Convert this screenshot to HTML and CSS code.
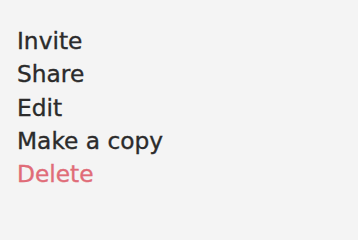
FILE: index.html
```html
<!DOCTYPE html>
<html>
<head>
<meta charset="utf-8">
<link rel="stylesheet" href="styles.css">
</head>
<body>
<ul class="menu">
  <li class="menu-item">Invite</li>
  <li class="menu-item">Share</li>
  <li class="menu-item">Edit</li>
  <li class="menu-item">Make a copy</li>
  <li class="menu-item menu-item--danger">Delete</li>
</ul>
</body>
</html>
```
FILE: styles.css
```css
html, body {
  margin: 0;
  padding: 0;
  background: #f4f4f4;
  width: 358px;
  height: 200px;
  overflow: hidden;
}
.menu {
  list-style: none;
  margin: 0;
  padding: 24px 0 0 17px;
  display: flex;
  flex-direction: column;
  font-family: "DejaVu Sans", sans-serif;
  font-size: 23.3px;
  line-height: 33.3px;
  color: #2b2b2b;
  -webkit-text-stroke: 0.35px currentColor;
}
.menu-item--danger {
  color: #e06c78;
}
```
